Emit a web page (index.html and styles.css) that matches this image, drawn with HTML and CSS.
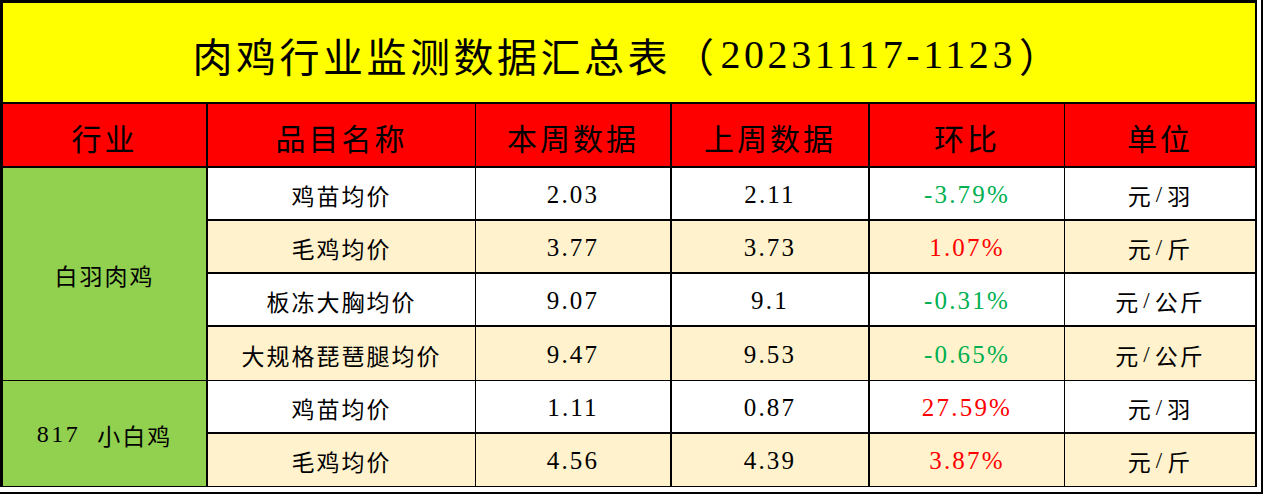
FILE: index.html
```html
<!DOCTYPE html>
<html lang="zh-CN">
<head>
<meta charset="utf-8">
<title>肉鸡行业监测数据汇总表</title>
<link rel="stylesheet" href="styles.css">
</head>
<body>
<div class="frame">
  <div class="sheet">
    <div class="cell title">肉鸡行业监测数据汇总表<span class="paren">（</span><span class="tnum">20231117-1123</span><span class="paren">）</span></div>

    <div class="cell head c1">行业</div>
    <div class="cell head c2">品目名称</div>
    <div class="cell head c3">本周数据</div>
    <div class="cell head c4">上周数据</div>
    <div class="cell head c5">环比</div>
    <div class="cell head c6">单位</div>

    <div class="cell ind c1 g1">白羽肉鸡</div>
    <div class="cell txt c2 w">鸡苗均价</div>
    <div class="cell num c3 w">2.03</div>
    <div class="cell num c4 w">2.11</div>
    <div class="cell num c5 w down">-3.79%</div>
    <div class="cell txt c6 w">元<span class="sl">/</span>羽</div>

    <div class="cell txt c2 y">毛鸡均价</div>
    <div class="cell num c3 y">3.77</div>
    <div class="cell num c4 y">3.73</div>
    <div class="cell num c5 y up">1.07%</div>
    <div class="cell txt c6 y">元<span class="sl">/</span>斤</div>

    <div class="cell txt c2 w">板冻大胸均价</div>
    <div class="cell num c3 w">9.07</div>
    <div class="cell num c4 w">9.1</div>
    <div class="cell num c5 w down">-0.31%</div>
    <div class="cell txt c6 w">元<span class="sl">/</span>公斤</div>

    <div class="cell txt c2 y thinb">大规格琵琶腿均价</div>
    <div class="cell num c3 y thinb">9.47</div>
    <div class="cell num c4 y thinb">9.53</div>
    <div class="cell num c5 y thinb down">-0.65%</div>
    <div class="cell txt c6 y thinb">元<span class="sl">/</span>公斤</div>

    <div class="cell ind c1 g2"><span class="tn">817&nbsp;&nbsp;</span>小白鸡</div>
    <div class="cell txt c2 w">鸡苗均价</div>
    <div class="cell num c3 w">1.11</div>
    <div class="cell num c4 w">0.87</div>
    <div class="cell num c5 w up">27.59%</div>
    <div class="cell txt c6 w">元<span class="sl">/</span>羽</div>

    <div class="cell txt c2 y thinb">毛鸡均价</div>
    <div class="cell num c3 y thinb">4.56</div>
    <div class="cell num c4 y thinb">4.39</div>
    <div class="cell num c5 y thinb up">3.87%</div>
    <div class="cell txt c6 y thinb">元<span class="sl">/</span>斤</div>
  </div>
</div>
</body>
</html>
```
FILE: styles.css
```css
html, body {
  margin: 0;
  padding: 0;
  background: #ffffff;
}

.frame {
  width: 1263px;
  height: 494px;
  box-sizing: border-box;
  border-right: 2px solid #000;
  border-bottom: 2px solid #000;
  background: #ffffff;
  overflow: hidden;
  font-family: "Liberation Serif", "Noto Sans CJK SC", serif;
  color: #000;
}

.sheet {
  display: grid;
  width: 1257px;
  box-sizing: border-box;
  grid-template-columns: 205px 268px 196px 198px 195px 192px;
  grid-template-rows: 101px 64px 53px 53px 53px 54px 53px 53px;
  border-left: 3px solid #000;
  border-top: 3px solid #000;
}

.cell {
  box-sizing: border-box;
  display: flex;
  align-items: center;
  justify-content: center;
  border-right: 2px solid #000;
  border-bottom: 2px solid #000;
  white-space: nowrap;
}

.c2, .c5 { border-right-width: 1px; }

.title {
  grid-column: 1 / span 6;
  background: #ffff00;
  font-size: 40px;
  letter-spacing: 3.5px;
  padding-top: 4px;
}

.paren { margin: 0 3px; }

.tnum {
  letter-spacing: 3.6px;
}

.head {
  background: #ff0000;
  font-size: 30px;
  letter-spacing: 3px;
  padding-top: 4px;
}

.ind {
  background: #92d050;
  font-size: 23px;
  letter-spacing: 2px;
  border-bottom-width: 1px;
  padding-top: 2px;
}

.g1 { grid-row: span 4; }
.g2 { grid-row: span 2; }

.tn { letter-spacing: 2.5px; font-size: 24px; }

.txt {
  font-size: 23px;
  letter-spacing: 2px;
  padding-top: 2px;
}

.num {
  font-size: 25px;
  letter-spacing: 2.2px;
  padding-top: 2px;
}

.sl { margin: 0 3px; }

.w { background: #ffffff; }
.y { background: #fff2cc; }

.thinb { border-bottom-width: 1px; }

.down { color: #00b050; }
.up { color: #ff0000; }
```
